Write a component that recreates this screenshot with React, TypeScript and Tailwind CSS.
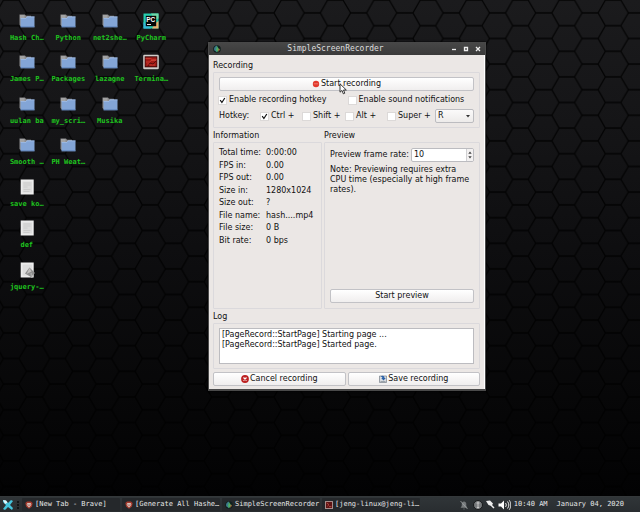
import type { ReactNode } from "react";

type IconKind = "folder" | "file" | "script" | "pycharm" | "terminal";
type DesktopItem = { name: string; kind: IconKind } | null;

const folder = (name: string): DesktopItem => ({ name, kind: "folder" });

const desktopItems: DesktopItem[] = [
  folder("Hash Ch…"), folder("Python"), folder("net2she…"), { name: "PyCharm", kind: "pycharm" },
  folder("James P…"), folder("Packages"), folder("lazagne"), { name: "Termina…", kind: "terminal" },
  folder("uulan ba"), folder("my_scri…"), folder("Musika"), null,
  folder("Smooth …"), folder("PH Weat…"), null, null,
  { name: "save ko…", kind: "file" }, null, null, null,
  { name: "def", kind: "file" }, null, null, null,
  { name: "jquery-…", kind: "script" }, null, null, null,
];

const stats: [string, string][] = [
  ["Total time:", "0:00:00"],
  ["FPS in:", "0.00"],
  ["FPS out:", "0.00"],
  ["Size in:", "1280x1024"],
  ["Size out:", "?"],
  ["File name:", "hash....mp4"],
  ["File size:", "0 B"],
  ["Bit rate:", "0 bps"],
];

function Wallpaper() {
  return (
    <svg className="absolute inset-0 h-full w-full" aria-hidden="true">
      <defs>
        <pattern id="hex" x="18.9" y="12.9" width="46.3" height="25.6" patternUnits="userSpaceOnUse">
          <path
            d="M0 12.8 L7.6 0 H23.6 L30.9 12.8 H46.3 M0 12.8 L7.6 25.6 H23.6 L30.9 12.8"
            fill="none"
            stroke="#000"
            strokeOpacity=".85"
            strokeWidth="1.3"
          />
        </pattern>
        <linearGradient id="shade" x1="0" y1="0" x2="0" y2="1">
          <stop offset="0" stopColor="#1b1b1d" />
          <stop offset="0.25" stopColor="#151517" />
          <stop offset="0.5" stopColor="#0e0e10" />
          <stop offset="0.8" stopColor="#070708" />
          <stop offset="1" stopColor="#020203" />
        </linearGradient>
      </defs>
      <rect width="100%" height="100%" fill="url(#shade)" />
      <rect width="100%" height="100%" fill="url(#hex)" />
    </svg>
  );
}

function DesktopIcon({ kind }: { kind: IconKind }) {
  return (
    <svg viewBox="0 0 16 16" className="h-4 w-4" aria-hidden="true">
      {kind === "folder" && (
        <>
          <path d="M.5 1.5h5.5l1 1.2h5V13H1.5L.5 12z" fill="#8b8b8d" />
          <path d="M1 2h4.5v3H1z" fill="#a3a3a3" />
          <path d="M1.6 5h5.2l1.2-1.6h7.5v10.8H1.6z" fill="#83a5d6" />
          <path d="M1.6 5.4h5.4l1.2-1.5h7.3" fill="none" stroke="#a9c3e6" strokeWidth=".7" />
          <path d="M1.6 13.8h13.9" stroke="#587db4" strokeWidth=".8" />
        </>
      )}
      {(kind === "file" || kind === "script") && (
        <>
          <path d="M1.7.5h13v15h-13z" fill="#ececec" />
          <path d="M3.5 2.5h9.5v11H3.5z" fill="#dcdcdc" />
          {kind === "file" && (
            <path d="M4.5 4h7M4.5 6h7M4.5 8h4M4.5 10.5h7M4.5 12.5h6" stroke="#c9c9c9" strokeWidth=".9" />
          )}
          {kind === "script" && (
            <>
              <path d="M10.500 5.500l5.500 5.500-4 4-6-3.500z" fill="#8e8e8e" />
              <path d="M10.500 6l2 3.500-5 2.500z" fill="#c2c0be" />
              <path d="M12 11l1 5" stroke="#aaa" strokeWidth="1.500" />
            </>
          )}
        </>
      )}
      {kind === "pycharm" && (
        <>
          <path d="M.5.5h15v15H.5z" fill="#27cfae" />
          <path d="M8 .5h7.500v5l-4 1z" fill="#6fd9a8" />
          <path d="M15.500 8v7.500H9l3-5z" fill="#e8b070" />
          <path d="M.5 9v6.500H8z" fill="#35b7d8" />
          <path d="M2.800 2.800h10.400v10.400H2.800z" fill="#050505" />
          <text x="3.200" y="8.600" fontSize="6.500" fontWeight="700" fill="#fff" fontFamily="Liberation Sans, sans-serif">PC</text>
          <path d="M4 11.500h4" stroke="#fff" strokeWidth=".9" />
        </>
      )}
      {kind === "terminal" && (
        <>
          <rect x=".2" y=".8" width="15.600" height="14.400" rx="1.200" fill="#d1cdca" />
          <rect x="1.700" y="2.300" width="12.600" height="11" fill="#3c0808" />
          <path d="M2.500 3.300h11v9h-11z" fill="#a31a15" />
          <path d="M2.500 4.500h5l2 1.200h4M3 8h4l1-1.500h5M4 10h2l1 1h5" stroke="#d5493c" strokeWidth=".7" fill="none" />
          <path d="M5 12l2-3 3 1 3-3" stroke="#4a0b0b" strokeWidth=".8" fill="none" />
        </>
      )}
    </svg>
  );
}

function RecorderLogo() {
  return (
    <svg viewBox="0 0 10 10" className="h-2 w-2 shrink-0" aria-hidden="true">
      <circle cx="5" cy="5" r="4.800" fill="#10211f" />
      <path d="M5 .5C2 1 .8 4 1.500 6.500L5 9z" fill="#3c7c8c" />
      <path d="M5 1.200l2.800 4.300L5 9 3.800 6z" fill="#4fae62" />
      <path d="M7.300 4l1.300 2-2.200 2.800z" fill="#c0663e" />
    </svg>
  );
}

function BraveLogo() {
  return (
    <svg viewBox="0 0 10 10" className="h-2 w-2 shrink-0" aria-hidden="true">
      <path d="M2.500.5h5l2 2-.8 4.500L5 9.700 1.300 7 .5 2.500z" fill="#a5392c" />
      <path d="M3 2.500h4l1 2-1.500 2L5 8 3.500 6.500 2 4.500z" fill="#d9c3bc" />
      <path d="M3 4.200l1.500.7M7 4.200l-1.500.7M5 5v1.500" stroke="#8a3328" strokeWidth=".7" />
    </svg>
  );
}

function TerminalLogo() {
  return (
    <svg viewBox="0 0 10 10" className="h-2 w-2 shrink-0" aria-hidden="true">
      <rect width="10" height="10" rx=".8" fill="#b9a9a5" />
      <rect x="1" y="1" width="8" height="8" fill="#5e1414" />
      <path d="M2 2.500l3 2-2 2M5 7h3" stroke="#c45249" fill="none" />
    </svg>
  );
}

const buttonLook =
  "flex h-[14px] items-center justify-center gap-px rounded-[2px] border border-[#c2c2c6] bg-linear-to-b from-white to-[#f0eeee]";

function Check({ label, checked = false, className = "" }: { label: string; checked?: boolean; className?: string }) {
  return (
    <label className={"flex items-center gap-[3px] whitespace-nowrap " + className}>
      <span className="grid">
        <input
          type="checkbox"
          defaultChecked={checked}
          className="peer col-start-1 row-start-1 h-[7px] w-[7px] appearance-none bg-white outline outline-[#dcd9d8]"
        />
        <svg viewBox="0 0 7 7" className="pointer-events-none col-start-1 row-start-1 hidden h-[7px] w-[7px] peer-checked:block" aria-hidden="true">
          <path d="M1.200 3.200l1.700 2.300L5.800 1" fill="none" stroke="#111" strokeWidth="1.200" />
        </svg>
      </span>
      {label}
    </label>
  );
}

function Group({ title, className = "", children }: { title: string; className?: string; children: ReactNode }) {
  return (
    <fieldset className="flex min-w-0 flex-col">
      <legend className="float-left h-3 w-full leading-3">{title}</legend>
      <div className={"flex flex-1 flex-col rounded-[1px] border border-[#dbd9dc] " + className}>{children}</div>
    </fieldset>
  );
}

function RecorderWindow() {
  return (
    <main className="absolute top-[42px] left-[208px] w-[278px] border-x border-b-2 border-[#4a4a4a] bg-[#ebe7e5] font-['DejaVu_Sans',sans-serif] text-[8px] leading-3 text-[#111] shadow-[0_0_2px_#000]">
      <header className="grid h-[13px] grid-cols-[auto_1fr_auto] items-center bg-linear-to-b from-[#484848] to-[#3a3a3a] pr-[3px] pl-1 text-[#dedede]">
        <RecorderLogo />
        <h1 className="text-center font-['DejaVu_Sans_Mono',monospace] text-[8px] leading-[13px]">SimpleScreenRecorder</h1>
        <div className="flex justify-end gap-1">
          <button aria-label="Minimize" className="h-2 w-2">
            <svg viewBox="0 0 8 8" className="h-2 w-2"><path d="M2 4.500h4" stroke="#eee" strokeWidth="1.300" /></svg>
          </button>
          <button aria-label="Maximize" className="h-2 w-2">
            <svg viewBox="0 0 8 8" className="h-2 w-2"><path d="M2.500 2.500h3v3h-3z" fill="none" stroke="#eee" strokeWidth="1.300" /></svg>
          </button>
          <button aria-label="Close" className="h-2 w-2">
            <svg viewBox="0 0 8 8" className="h-2 w-2"><path d="M2 2l4 4M6 2L2 6" stroke="#eee" strokeWidth="1.300" /></svg>
          </button>
        </div>
      </header>

      <div className="flex flex-col border-r border-white px-1 pt-[5px] pb-[3px]">
        <Group title="Recording" className="gap-[3px] p-[4px] px-[5px]">
          <button className={buttonLook}>
            <svg viewBox="0 0 8 8" className="h-2 w-2" aria-hidden="true">
              <circle cx="4" cy="4" r="3.200" fill="#e23a2e" />
              <path d="M1.800 3.800h4.400" stroke="#f08a7e" strokeWidth=".8" />
            </svg>
            Start recording
          </button>
          <div className="grid grid-cols-2">
            <Check label="Enable recording hotkey" checked />
            <Check label="Enable sound notifications" className="pl-[2px]" />
          </div>
          <div className="flex h-[14px] items-center">
            <span className="w-[42px]">Hotkey:</span>
            <Check label="Ctrl +" checked className="w-[42px]" />
            <Check label="Shift +" className="w-[43px]" />
            <Check label="Alt +" className="w-[42px]" />
            <Check label="Super +" />
            <span className="ml-auto grid w-[39px]">
              <select
                aria-label="Hotkey letter"
                defaultValue="R"
                className="col-start-1 row-start-1 h-[14px] appearance-none rounded-[2px] border border-[#bcbcc0] bg-linear-to-b from-[#fbfafa] to-[#edebea] pl-[2px] leading-3"
              >
                <option>R</option>
              </select>
              <svg viewBox="0 0 6 6" className="pointer-events-none col-start-1 row-start-1 mr-[3px] h-[6px] w-[6px] self-center justify-self-end" aria-hidden="true">
                <path d="M1 2h4L3 4.500z" fill="#333" />
              </svg>
            </span>
          </div>
        </Group>

        <div className="mt-[2px] grid grid-cols-[109px_1fr] gap-[2px]">
          <Group title="Information" className="p-1 pl-[5px]">
            <dl className="grid h-[100px] grid-rows-8">
              {stats.map(([name, value]) => (
                <div key={name} className="grid grid-cols-[47px_1fr] items-center">
                  <dt className="whitespace-nowrap">{name}</dt>
                  <dd className="whitespace-nowrap">{value}</dd>
                </div>
              ))}
            </dl>
          </Group>
          <Group title="Preview" className="min-h-[167px] p-[5px]">
            <label className="flex items-center justify-between whitespace-nowrap">
              Preview frame rate:
              <span className="flex h-[14px] w-[63px] overflow-hidden rounded-[2px] border border-[#bcbcc0] bg-white">
                <input type="text" inputMode="numeric" defaultValue="10" className="min-w-0 flex-1 pl-[2px] leading-3 outline-none" />
                <svg viewBox="0 0 7 12" className="h-3 w-[7px] border-l border-[#d0d0d2] bg-[#f3f1f1]" aria-hidden="true">
                  <path d="M1.500 4.500h4L3.500 2zM1.500 7.500h4L3.500 10z" fill="#444" />
                </svg>
              </span>
            </label>
            <p className="mt-[3px] leading-[10px]">Note: Previewing requires extra CPU time (especially at high frame rates).</p>
            <button className={buttonLook + " mt-auto"}>Start preview</button>
          </Group>
        </div>

        <div className="mt-[2px]">
          <Group title="Log" className="p-[4px] px-[5px]">
            <textarea
              readOnly
              aria-label="Log"
              className="h-9 w-full resize-none overflow-hidden border border-[#bcbcc0] bg-white px-[2px] py-[1px] leading-[10px] outline-none"
              value={"[PageRecord::StartPage] Starting page ...\n[PageRecord::StartPage] Started page."}
            />
          </Group>
        </div>

        <div className="mt-[3px] grid grid-cols-2 gap-[2px]">
          <button className={buttonLook}>
            <svg viewBox="0 0 8 8" className="h-2 w-2" aria-hidden="true">
              <circle cx="4" cy="4" r="3.900" fill="#bd2222" />
              <path d="M2.500 2.500l3 3M5.500 2.500l-3 3" stroke="#fff" strokeWidth="1.200" />
            </svg>
            Cancel recording
          </button>
          <button className={buttonLook}>
            <svg viewBox="0 0 8 8" className="h-2 w-2" aria-hidden="true">
              <path d="M.5 1h7v6.500h-7z" fill="#d9dce0" stroke="#77808a" strokeWidth=".7" />
              <path d="M1.500 1.500c2-1.500 4-.5 4 1.500h1.300L4.500 5.500 2.200 3h1.200c0-.8-.8-1.200-1.900-1.500z" fill="#2c62a8" />
              <path d="M1.500 6.500h5" stroke="#8d959d" strokeWidth=".8" />
            </svg>
            Save recording
          </button>
        </div>
      </div>
    </main>
  );
}

function Task({ label, icon }: { label: string; icon: ReactNode }) {
  return (
    <button className="flex h-[13px] w-[98px] items-center gap-[2px] overflow-hidden rounded-[1px] bg-[#25282b] pl-[3px] whitespace-nowrap">
      {icon}
      {label}
    </button>
  );
}

function Taskbar() {
  return (
    <footer className="relative flex h-4 items-center border-t border-[#34383a] bg-linear-to-b from-[#303538] to-[#292d30] pr-4 font-['DejaVu_Sans_Mono',monospace] text-[7px] leading-[13px] text-[#e4e6e6]">
      <button aria-label="Applications" className="ml-[2px] h-3 w-3">
        <svg viewBox="0 0 12 12" className="h-3 w-3">
          <path d="M1 1l3 .5L6 4l3-3 2 1-3 4 3 3-1 2-4-3-3 3-2-1 3-4-3-3z" fill="#45c4dc" />
          <path d="M1 1l3 .5 1.500 2L3 5z" fill="#e6f6fa" />
        </svg>
      </button>
      <span className="mx-[3px] h-2 border-l-2 border-dotted border-[#111315]" />
      <nav className="flex gap-[2px]">
        <Task label="[New Tab - Brave]" icon={<BraveLogo />} />
        <Task label="[Generate All Hashe…" icon={<BraveLogo />} />
        <Task label="SimpleScreenRecorder" icon={<RecorderLogo />} />
        <Task label="[jeng-linux@jeng-li…" icon={<TerminalLogo />} />
      </nav>
      <div className="ml-auto flex items-center">
        <svg viewBox="0 0 52 12" className="mr-[3px] h-3 w-[52px]" aria-hidden="true">
          <path d="M2 8.500h6L7 7V5c0-3-4-3-4 0v2zM4 10h2" fill="#777b7d" stroke="#777b7d" strokeWidth=".5" />
          <path d="M1.500 2l7 8" stroke="#a0a3a5" strokeWidth=".8" />
          <circle cx="19" cy="6" r="4.500" fill="#76797b" stroke="#17191a" />
          <path d="M19 2.500v7M17.500 4h3M17.800 8.500h2.400" stroke="#c9c9c9" />
          <path d="M27 2l4-.5 3 3-1.500 2.500-3-1z" fill="#eee" />
          <path d="M32 6l3 3" stroke="#eee" strokeWidth="1.500" />
          <path d="M39.500 4.500H42L45 1.500v9L42 7.500h-2.500z" fill="#fff" />
          <path d="M46.500 4c1 1.300 1 2.700 0 4M48.500 2.500c1.800 2.300 1.800 4.700 0 7M50.300 1.300c2 3 2 6.400 0 9.400" fill="none" stroke="#fff" strokeWidth=".9" />
        </svg>
        <time>10:40 AM</time>
        <time className="ml-[9px]">January 04, 2020</time>
      </div>
    </footer>
  );
}

export default function App() {
  return (
    <div className="flex min-h-screen flex-col bg-black">
      <section className="relative min-h-[400px] flex-1 overflow-hidden">
        <Wallpaper />
        <div className="relative mt-[13px] ml-[6px] grid h-[290px] w-[166px] grid-cols-4 grid-rows-7">
          {desktopItems.map((item, i) =>
            item ? (
              <button key={i} className="flex flex-col items-center gap-1 font-['DejaVu_Sans_Mono',monospace] text-[7px] leading-[10px] font-bold whitespace-nowrap text-[#1fc41f]">
                <DesktopIcon kind={item.kind} />
                {item.name}
              </button>
            ) : (
              <span key={i} />
            ),
          )}
        </div>
        <RecorderWindow />
        <svg viewBox="0 0 8 12" className="pointer-events-none absolute top-[83px] left-[339px] h-3 w-2" aria-hidden="true">
          <path d="M1 .8v8.400l2-1.800L4.300 10.800l1.500-.6L4.500 7H7.300z" fill="#fff" stroke="#222" strokeWidth=".9" />
        </svg>
      </section>
      <Taskbar />
    </div>
  );
}
